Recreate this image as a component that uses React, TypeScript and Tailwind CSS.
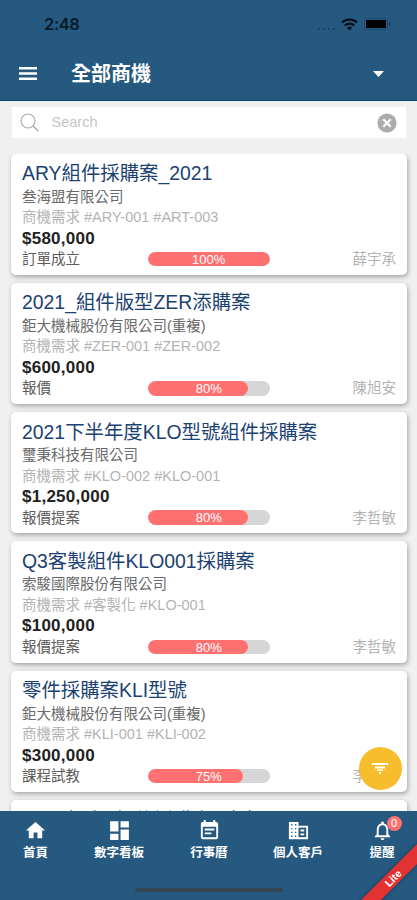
import type { ReactNode } from "react";
import { MdDashboard, MdEventNote, MdHome, MdNotificationsNone } from "react-icons/md";

type Deal = {
  title: string;
  company: string;
  tags: string;
  price: string;
  stage: string;
  progress: number;
  owner: string;
};

const deals: Deal[] = [
  { title: "ARY組件採購案_2021", company: "叁海盟有限公司", tags: "#ARY-001 #ART-003", price: "$580,000", stage: "訂單成立", progress: 100, owner: "薛宇承" },
  { title: "2021_組件版型ZER添購案", company: "鉅大機械股份有限公司(重複)", tags: "#ZER-001 #ZER-002", price: "$600,000", stage: "報價", progress: 80, owner: "陳旭安" },
  { title: "2021下半年度KLO型號組件採購案", company: "璽秉科技有限公司", tags: "#KLO-002 #KLO-001", price: "$1,250,000", stage: "報價提案", progress: 80, owner: "李哲敏" },
  { title: "Q3客製組件KLO001採購案", company: "索駿國際股份有限公司", tags: "#客製化 #KLO-001", price: "$100,000", stage: "報價提案", progress: 80, owner: "李哲敏" },
  { title: "零件採購案KLI型號", company: "鉅大機械股份有限公司(重複)", tags: "#KLI-001 #KLI-002", price: "$300,000", stage: "課程試教", progress: 75, owner: "李哲敏" },
];

function StatusBar() {
  return (
    <div className="flex h-[48px] items-center pl-[44px] pr-[26px] text-[#071a2b]">
      <span className="font-['Inter','Liberation_Sans',sans-serif] text-[16.500px] font-semibold leading-none tracking-[-0.400px]">2:48</span>
      <div className="ml-auto flex items-center">
        <div className="mt-[9px] flex gap-[3px] opacity-40">
          <i className="size-[2px] rounded-full bg-current" />
          <i className="size-[2px] rounded-full bg-current" />
          <i className="size-[2px] rounded-full bg-current" />
          <i className="size-[2px] rounded-full bg-current" />
        </div>
        <svg className="ml-[6px] h-[13px] w-[17px]" viewBox="0 0 17 13" fill="none" stroke="#020d18" strokeWidth="2.1">
          <path d="M1 4.6a10.8 10.8 0 0 1 15 0" />
          <path d="M3.8 7.5a6.8 6.8 0 0 1 9.4 0" />
          <path d="M8.5 12.4 5.9 9.7a3.8 3.8 0 0 1 5.2 0z" fill="#020d18" stroke="none" />
        </svg>
        <svg className="ml-[6px] h-[12px] w-[27px]" viewBox="0 0 27 12">
          <rect x=".5" y=".5" width="23" height="11" rx="2.5" fill="none" stroke="#1b4a6e" />
          <rect x="2" y="2" width="20" height="8" rx="1" fill="#000" />
          <path d="M25 4v4c1-.3 1.5-1 1.5-2S26 4.3 25 4z" fill="#123a5b" />
        </svg>
      </div>
    </div>
  );
}

function Header() {
  return (
    <header className="h-[101px] shrink-0 border-b border-[#0d4166] bg-[#26597f]">
      <StatusBar />
      <div className="flex h-[51px] items-center pl-[19px] pr-[33px] text-white">
        <svg className="h-[13px] w-[18px]" viewBox="0 0 18 13" fill="#fff">
          <path d="M0 0h18v2.4H0zM0 5.300h18v2.400H0zM0 10.600h18v2.400H0z" />
        </svg>
        <h1 className="ml-[34px] text-[20px] font-bold leading-none">全部商機</h1>
        <svg className="ml-auto h-[6px] w-[11px]" viewBox="0 0 11 6">
          <path d="M0 0h11L5.500 6z" fill="#fff" />
        </svg>
      </div>
    </header>
  );
}

function SearchBox() {
  return (
    <div className="mx-auto mt-[6px] flex h-[31px] w-[394px] shrink-0 items-center bg-white pl-[8px] pr-[9px]">
      <svg className="size-[19px]" viewBox="0 0 19 19" fill="none" stroke="#aaa" strokeWidth="1.1">
        <circle cx="8" cy="8" r="7" />
        <path d="m13 13 5.300 5" strokeWidth="1.6" />
      </svg>
      <span className="ml-[13px] text-[14.500px] text-[#c6c6c6]">Search</span>
      <svg className="ml-auto size-[20px]" viewBox="0 0 20 20">
        <circle cx="10" cy="10" r="9.6" fill="#acacac" />
        <path d="m6.300 6.300 7.400 7.400m0-7.400-7.400 7.400" stroke="#fff" strokeWidth="2.2" />
      </svg>
    </div>
  );
}

// Fill widths include the rounded end cap
const fillWidth: Record<number, number> = { 75: 78, 80: 82.5, 100: 100 };

function DealCard({ deal }: { deal: Deal }) {
  return (
    <article className="h-[121.300px] shrink-0 whitespace-nowrap rounded-[5px] bg-white px-[11px] pt-[6.500px] text-[14.500px] shadow-[1px_2px_5px_rgba(0,0,0,0.32)]">
      <h2 className="h-[26.500px] text-[19.400px] leading-[26px] text-[#1b4272]">{deal.title}</h2>
      <p className="h-[20.500px] leading-[21px] text-[#6a6a6a]">{deal.company}</p>
      <p className="h-[20.500px] leading-[20px] text-[#b3b3b3]">商機需求 {deal.tags}</p>
      <p className="h-[21.500px] text-[17px] font-bold leading-[22px] tracking-[0.250px] text-[#222]">{deal.price}</p>
      <div className="flex h-[20px] items-center leading-[20px]">
        <span className="w-[126px] text-[#5c5c5c]">{deal.stage}</span>
        <div className="relative h-[14.500px] w-[121.500px] overflow-hidden rounded-full bg-[#d6d6d6]">
          <div className="h-full rounded-full bg-[#ff7171]" style={{ width: `${fillWidth[deal.progress]}%` }} />
          <span className="absolute inset-0 text-center text-[13px] leading-[16px] text-white">{deal.progress}%</span>
        </div>
        <span className="ml-auto text-[#b3b3b3]">{deal.owner}</span>
      </div>
    </article>
  );
}

function BuildingIcon() {
  return (
    <svg className="size-[23px]" viewBox="0 0 24 24">
      <path d="M2 3h10v4h10v14H2z" fill="#fff" />
      <path d="M12 9h8v10h-8z" fill="#26597f" />
      <path d="M14 11h4v2h-4zM14 15h4v2h-4z" fill="#fff" />
      <path d="M4.300 5.300h1.400v1.400H4.300zM8.300 5.300h1.400v1.400H8.300zM4.300 9.300h1.400v1.400H4.300zM8.300 9.300h1.400v1.400H8.300zM4.300 13.300h1.400v1.400H4.300zM8.300 13.300h1.400v1.400H8.300zM4.300 17.300h1.400v1.400H4.300zM8.300 17.300h1.400v1.400H8.300z" fill="#26597f" />
    </svg>
  );
}

function NavItem({ icon, label, className }: { icon: ReactNode; label: string; className: string }) {
  return (
    <div className={`flex flex-col items-center ${className}`}>
      <span className="flex h-[23px] items-center">{icon}</span>
      <span className="mt-[2px] whitespace-nowrap text-[12.500px] font-bold leading-[19px]">{label}</span>
    </div>
  );
}

function BottomNav() {
  return (
    <nav className="relative h-[89px] shrink-0 overflow-hidden bg-[#26597f] text-white">
      <div className="flex pl-[10px] pt-[7.500px]">
        <NavItem className="w-[51px]" icon={<MdHome size={23} />} label="首頁" />
        <NavItem className="ml-[32px] w-[52px]" icon={<MdDashboard size={25} />} label="數字看板" />
        <NavItem className="ml-[38px] w-[52px]" icon={<MdEventNote size={23} />} label="行事曆" />
        <NavItem className="ml-[37px] w-[52px]" icon={<BuildingIcon />} label="個人客戶" />
        <NavItem
          className="ml-[32px] w-[52px]"
          icon={
            <span className="relative">
              <MdNotificationsNone size={23} />
              <b className="absolute -top-[3px] left-[16px] size-[15px] rounded-full bg-[#ff7171] text-center text-[11px] font-normal leading-[15px]">0</b>
            </span>
          }
          label="提醒"
        />
      </div>
      <div className="absolute bottom-[8px] left-[135px] h-[4px] w-[148px] rounded-full bg-[#354653]" />
      <div className="absolute left-[341px] top-[60px] h-[14px] w-[104px] -rotate-45 bg-[#e23234] text-center text-[10.500px] font-bold leading-[14px] shadow-[0_0_4px_rgba(0,0,0,0.4)]">Lite</div>
    </nav>
  );
}

export default function App() {
  return (
    <div className="relative flex h-[900px] w-[417px] flex-col overflow-hidden bg-[#f0f0f0] font-['Liberation_Sans','Noto_Sans_CJK_TC',sans-serif]">
      <Header />
      <SearchBox />
      <main className="mt-[15.500px] flex min-h-0 flex-1 flex-col gap-[8px] overflow-hidden pl-[11px] pr-[10px]">
        {deals.map((deal) => (
          <DealCard key={deal.title} deal={deal} />
        ))}
        {/* next card, only its top edge shows above the nav */}
        <article className="h-[121.300px] shrink-0 rounded-[5px] bg-white px-[11px] pt-[7.500px] shadow-[1px_2px_5px_rgba(0,0,0,0.32)]">
          <h2 className="whitespace-nowrap text-[19.400px] leading-[26px] text-[#1b4272]">2021年度_組件採購案 型號</h2>
        </article>
      </main>
      <BottomNav />
      <button className="absolute left-[358.500px] top-[747px] flex size-[43px] items-center justify-center rounded-full bg-[#f8bd2d]">
        <svg className="h-[11px] w-[16px]" viewBox="0 0 16 11" fill="#fff">
          <path d="M0 0h16v2H0zM3 3.500h10v2H3zM5 6.500h6v1.500H5zM7 9h2v2H7z" />
        </svg>
      </button>
    </div>
  );
}
